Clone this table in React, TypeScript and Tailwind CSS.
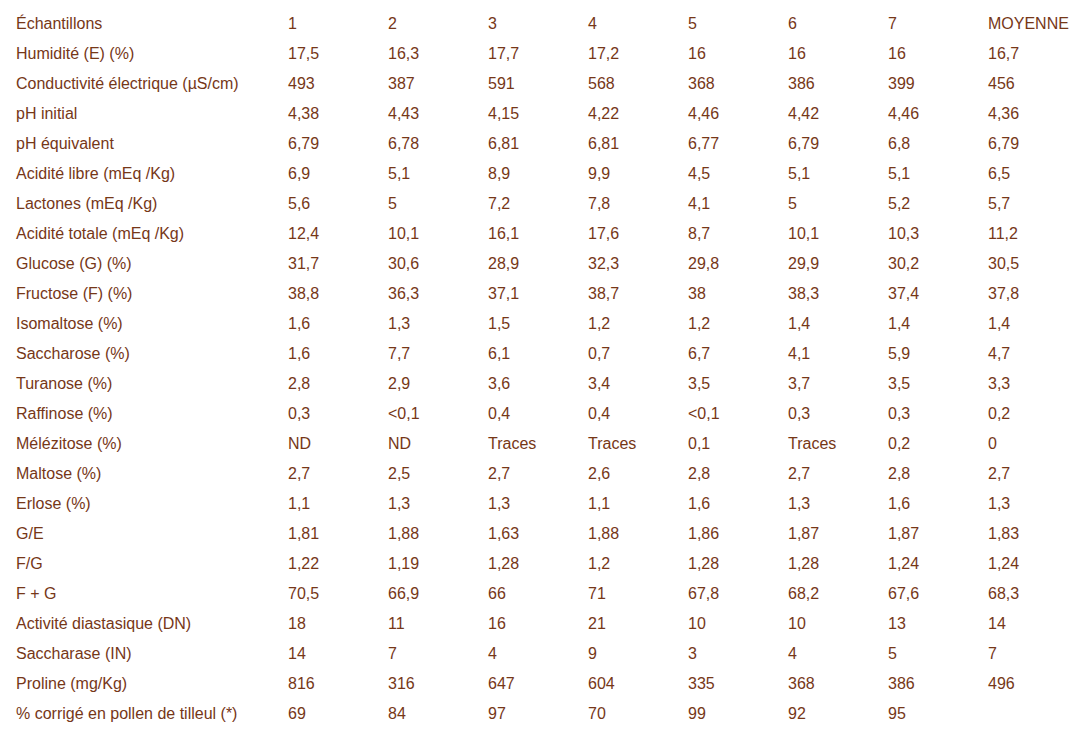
const rows: string[][] = [
  ["Échantillons", "1", "2", "3", "4", "5", "6", "7", "MOYENNE"],
  ["Humidité (E) (%)", "17,5", "16,3", "17,7", "17,2", "16", "16", "16", "16,7"],
  ["Conductivité électrique (µS/cm)", "493", "387", "591", "568", "368", "386", "399", "456"],
  ["pH initial", "4,38", "4,43", "4,15", "4,22", "4,46", "4,42", "4,46", "4,36"],
  ["pH équivalent", "6,79", "6,78", "6,81", "6,81", "6,77", "6,79", "6,8", "6,79"],
  ["Acidité libre (mEq /Kg)", "6,9", "5,1", "8,9", "9,9", "4,5", "5,1", "5,1", "6,5"],
  ["Lactones (mEq /Kg)", "5,6", "5", "7,2", "7,8", "4,1", "5", "5,2", "5,7"],
  ["Acidité totale (mEq /Kg)", "12,4", "10,1", "16,1", "17,6", "8,7", "10,1", "10,3", "11,2"],
  ["Glucose (G) (%)", "31,7", "30,6", "28,9", "32,3", "29,8", "29,9", "30,2", "30,5"],
  ["Fructose (F) (%)", "38,8", "36,3", "37,1", "38,7", "38", "38,3", "37,4", "37,8"],
  ["Isomaltose (%)", "1,6", "1,3", "1,5", "1,2", "1,2", "1,4", "1,4", "1,4"],
  ["Saccharose (%)", "1,6", "7,7", "6,1", "0,7", "6,7", "4,1", "5,9", "4,7"],
  ["Turanose (%)", "2,8", "2,9", "3,6", "3,4", "3,5", "3,7", "3,5", "3,3"],
  ["Raffinose (%)", "0,3", "<0,1", "0,4", "0,4", "<0,1", "0,3", "0,3", "0,2"],
  ["Mélézitose (%)", "ND", "ND", "Traces", "Traces", "0,1", "Traces", "0,2", "0"],
  ["Maltose (%)", "2,7", "2,5", "2,7", "2,6", "2,8", "2,7", "2,8", "2,7"],
  ["Erlose (%)", "1,1", "1,3", "1,3", "1,1", "1,6", "1,3", "1,6", "1,3"],
  ["G/E", "1,81", "1,88", "1,63", "1,88", "1,86", "1,87", "1,87", "1,83"],
  ["F/G", "1,22", "1,19", "1,28", "1,2", "1,28", "1,28", "1,24", "1,24"],
  ["F + G", "70,5", "66,9", "66", "71", "67,8", "68,2", "67,6", "68,3"],
  ["Activité diastasique (DN)", "18", "11", "16", "21", "10", "10", "13", "14"],
  ["Saccharase (IN)", "14", "7", "4", "9", "3", "4", "5", "7"],
  ["Proline (mg/Kg)", "816", "316", "647", "604", "335", "368", "386", "496"],
  ["% corrigé en pollen de tilleul (*)", "69", "84", "97", "70", "99", "92", "95", ""],
];

export default function App() {
  return (
    <div className="bg-white w-[1080px] h-[729px] overflow-hidden pt-[9px] pl-4 font-['Liberation_Sans',Arial,sans-serif] text-[16px] text-[#763718]">
      {rows.map((r, i) => (
        <div key={i} className="grid grid-cols-[272px_repeat(7,100px)_1fr] h-[30px] leading-[30px] whitespace-nowrap">
          {r.map((c, j) => (
            <div key={j}>{c}</div>
          ))}
        </div>
      ))}
    </div>
  );
}
